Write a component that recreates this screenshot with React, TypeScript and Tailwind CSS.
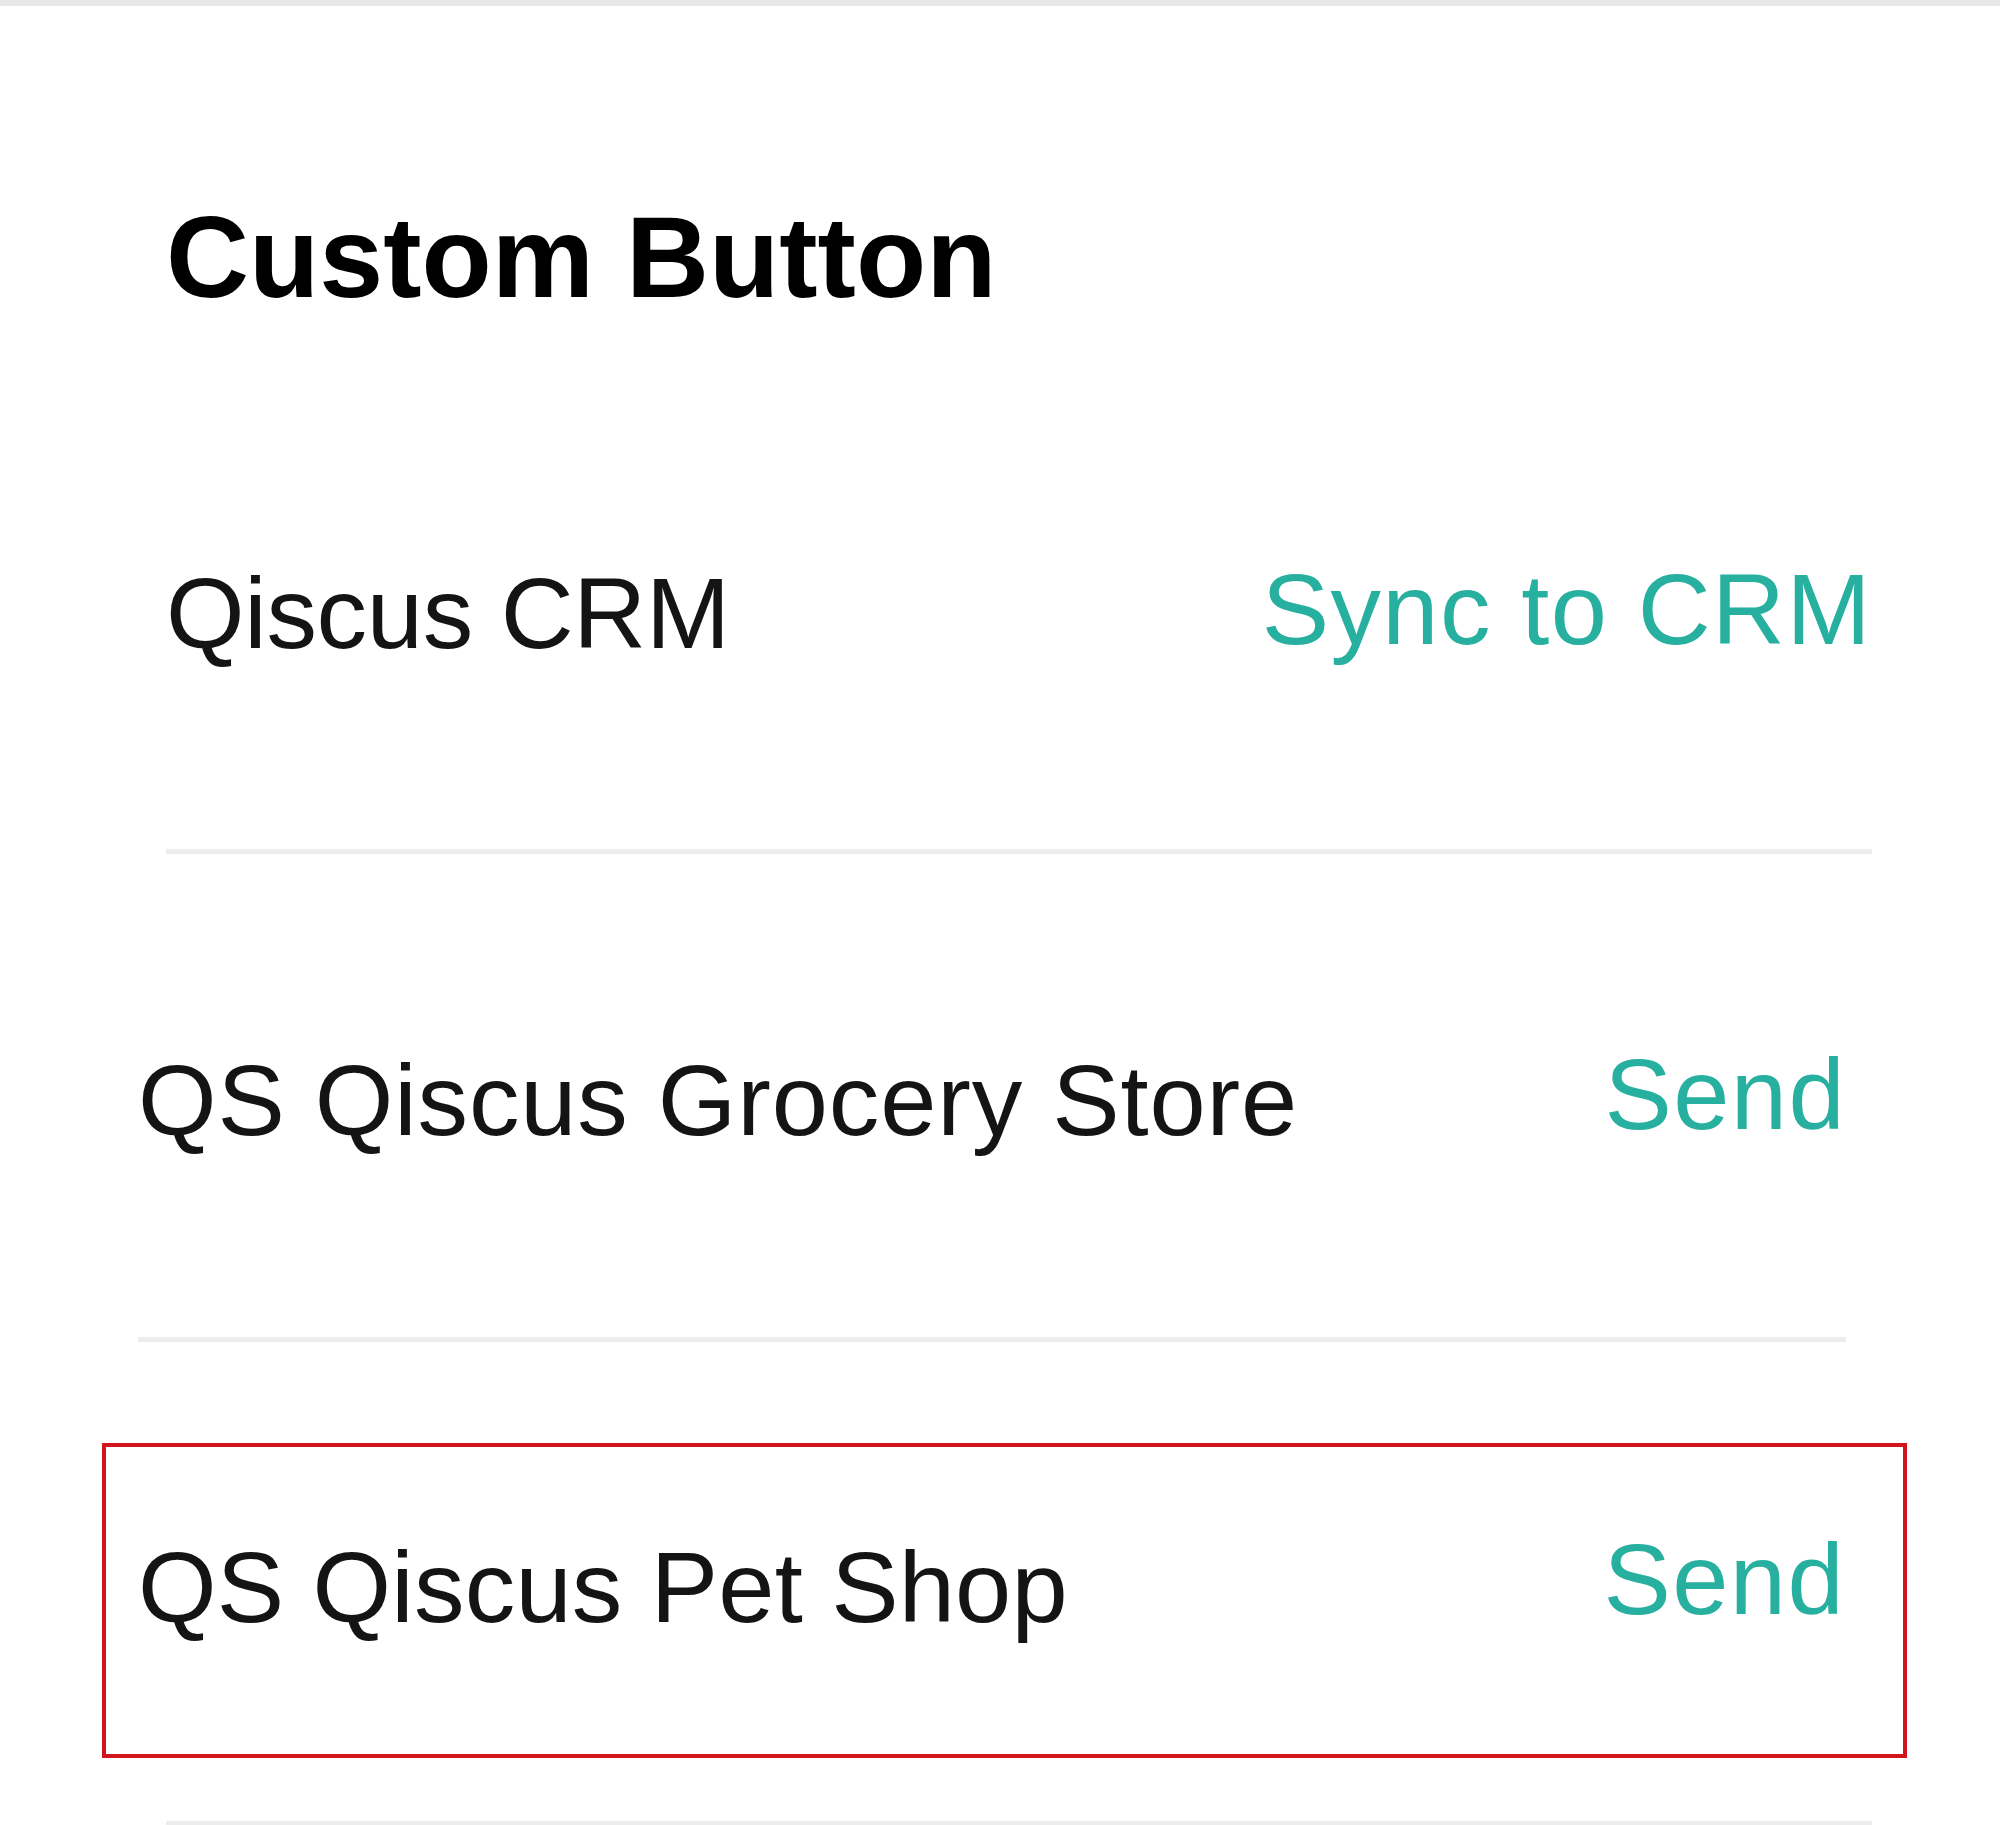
import React from 'react';

interface ButtonRowProps {
  name: string;
  action: string;
  nameOffset: string;
  className?: string;
}

const ButtonRow: React.FC<ButtonRowProps> = ({ name, action, nameOffset, className }) => {
  return (
    <div className={`flex items-start justify-between ${className ?? ''}`}>
      <span className={`text-[101px] leading-[100px] text-[#141414] ${nameOffset}`}>{name}</span>
      <button className="text-[101px] leading-[100px] tracking-[1.4px] text-[#27b0a0] cursor-pointer">{action}</button>
    </div>
  );
};

export default function App() {
  return (
    <div
      className="w-[2000px] h-[1825px] overflow-hidden bg-white"
      style={{ fontFamily: '"Liberation Sans", Arial, sans-serif' }}
    >
      <div className="h-[6px] bg-[#e8e8e8]" />

      <div className="pl-[166px] pr-[128px]">
        <h2 className="mt-[194px] text-[115px] leading-[115px] font-bold text-black">Custom Button</h2>

        {/* CRM sync */}
        <ButtonRow
          name="Qiscus CRM"
          action="Sync to CRM"
          nameOffset="mt-[4px] tracking-[-0.3px]"
          className="pt-[244px] pb-[186px] border-b-[5px] border-[#ececec]"
        />

        {/* stores, shifted slightly to the left */}
        <ButtonRow
          name="QS Qiscus Grocery Store"
          action="Send"
          nameOffset="mt-[6px] tracking-[0.9px]"
          className="-ml-[28px] mr-[26px] pt-[190px] pb-[187px] border-b-[5px] border-[#ececec]"
        />

        <div className="mt-[101px] -ml-[64px] -mr-[35px] border-[4px] border-[#d0151d] pl-[32px] pr-[58px] pt-[82px] pb-[117px]">
          <ButtonRow name="QS Qiscus Pet Shop" action="Send" nameOffset="mt-[8px] tracking-[0.2px]" />
        </div>

        <div className="mt-[63px] h-[5px] bg-[#ececec]" />
      </div>
    </div>
  );
}
